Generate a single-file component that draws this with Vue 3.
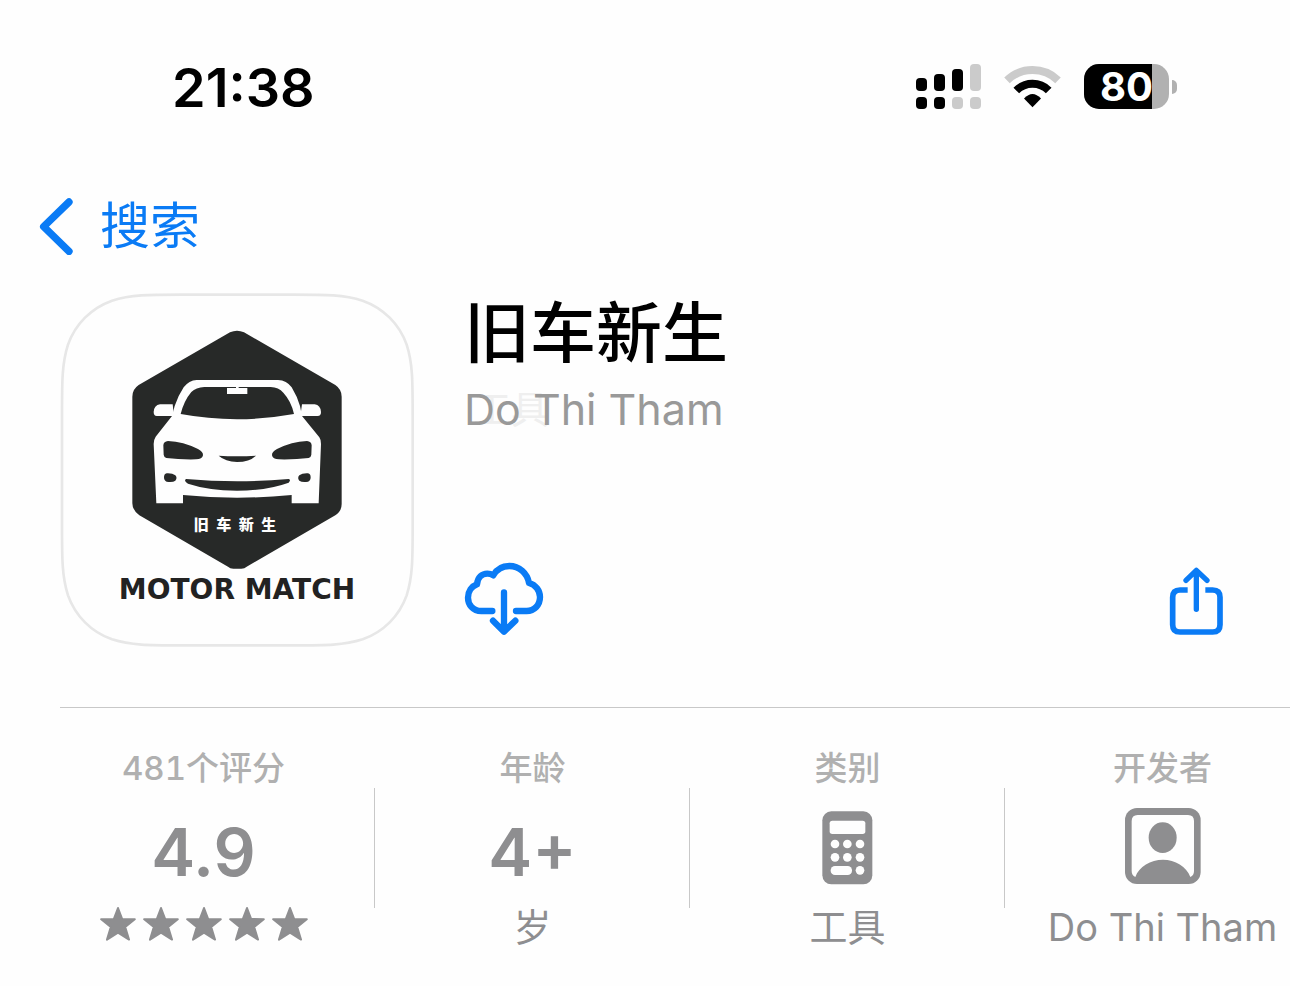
<template>
  <div class="page">
    <header class="status-bar">
      <time class="clock">21:38</time>
      <div class="status-icons">
        <svg class="signal" viewBox="0 0 65 45" aria-hidden="true">
          <rect x="0" y="14" width="11" height="13" rx="4" />
          <rect x="18" y="10" width="11" height="17" rx="4" />
          <rect x="36" y="5" width="11" height="22" rx="4" />
          <rect class="off" x="54" y="0" width="11" height="27" rx="4" />
          <rect x="0" y="33" width="11" height="12" rx="4" />
          <rect x="18" y="33" width="11" height="12" rx="4" />
          <rect class="off" x="36" y="33" width="11" height="12" rx="4" />
          <rect class="off" x="54" y="33" width="11" height="12" rx="4" />
        </svg>
        <svg class="wifi" viewBox="1003 64 59 45" aria-hidden="true">
          <path class="arc off" d="M1007 80.3A37 37 0 0 1 1058 80.3" />
          <path class="arc" d="M1016.3 90.5A23 23 0 0 1 1048.7 90.5" />
          <path d="M1032.5 107.2L1024 98.4Q1032.5 89.4 1041 98.4Z" />
        </svg>
        <div class="battery">
          <div class="battery-body">
            <div class="battery-level" :style="{ width: battery + '%' }"></div>
            <span class="battery-text">{{ battery }}</span>
          </div>
          <div class="battery-cap"></div>
        </div>
      </div>
    </header>

    <nav class="nav">
      <a href="#" class="back">
        <svg viewBox="58 474 102 171" aria-hidden="true">
          <path d="M148 486L72 560L148 634" />
        </svg>
        <span>搜索</span>
      </a>
    </nav>

    <main>
      <section class="app-header">
        <svg class="app-icon" viewBox="30 39 1062 1062" role="img" aria-label="Motor Match">
          <path
            class="icon-border"
            d="M398 44H726C830 44 882 44 938 62C1000 84 1048 132 1070 194C1088 250 1088 302 1088 406V734C1088 838 1088 890 1070 946C1048 1008 1000 1056 938 1078C882 1096 830 1096 726 1096H398C294 1096 242 1096 186 1078C124 1056 76 1008 54 946C36 890 36 838 36 734V406C36 302 36 250 54 194C76 132 124 84 186 62C242 44 294 44 398 44Z"
          />
          <path
            class="ink"
            d="M540 157Q561 148 582 157L856 315Q875 328 875 350V672Q875 694 856 706L590 860Q584 866 574 866H550Q540 866 534 860L268 706Q247 690 247 670V350Q247 328 266 315Z"
          />
          <!-- car body -->
          <path
            class="paper"
            d="M440 300H684Q710 301 725 322Q742 350 750 378L756 408L808 472Q813 479 813 492L806 670H725V645Q561 661 399 645V670H319L311 492Q311 479 317 470L366 408L374 378Q385 346 401 322Q417 301 440 300Z"
          />
          <path class="paper" d="M330 373H368L372 408H320Q311 408 311 396Q312 376 330 373Z" />
          <path class="paper" d="M794 373H756L751 408H803Q813 408 813 396Q812 376 794 373Z" />
          <path
            class="ink"
            d="M463 321H662Q686 322 700 338Q724 364 732 402Q650 417 561 418Q474 417 392 402Q402 362 424 336Q438 322 463 321Z"
          />
          <path class="paper" d="M531 324H558V318H566V324H592V342H531Z" />
          <path class="ink" d="M354 483Q400 485 444 507Q460 515 459 526Q457 538 438 538Q390 539 349 534Q342 532 341 524L340 496Q341 484 354 483Z" />
          <path class="ink" d="M771 483Q725 485 681 507Q665 515 666 526Q668 538 687 538Q735 539 776 534Q783 532 784 524L785 496Q784 484 771 483Z" />
          <path class="ink" d="M506 527Q561 530 618 527Q598 546 561 546Q526 545 506 527Z" />
          <path class="ink" d="M350 580Q367 579 376 586Q383 594 376 602Q368 608 350 605Q342 602 342 592Q342 582 350 580Z" />
          <path class="ink" d="M774 580Q757 579 748 586Q741 594 748 602Q756 608 774 605Q782 602 782 592Q782 582 774 580Z" />
          <path class="ink" d="M408 597Q561 611 716 597Q724 599 716 608Q650 632 561 632Q474 631 414 611Q400 602 408 597Z" />
          <text class="icon-name" x="555" y="749">旧&ensp;车&ensp;新&ensp;生</text>
          <text class="icon-brand" x="561" y="957">MOTOR MATCH</text>
        </svg>

        <div class="app-info">
          <h1 class="app-title">旧车新生</h1>
          <p class="app-subtitle">
            <span class="subtitle-ghost">工具</span>
            <span class="subtitle-text">Do Thi Tham</span>
          </p>
          <div class="actions">
            <button type="button" class="icon-button download" aria-label="下载">
              <svg viewBox="72 36 240 222">
                <path d="M157 183H124C98 183 84 163 84 143C84 124 95 109 111 103C113 82 126 71 142 71Q152 71 160 76C170 58 187 48 208 48C238 48 262 70 267 99C287 104 300 122 300 141C300 165 283 183 260 183H228" />
                <path d="M192 127V244M159 212L192 245L226 212" />
              </svg>
            </button>
            <button type="button" class="icon-button share" aria-label="分享">
              <svg viewBox="57 51 165 207">
                <path class="tray" d="M113 120H90Q68 120 68 142V224Q68 246 90 246H188Q210 246 210 224V142Q210 120 188 120H166" />
                <path d="M139 64V178M108 91L139 61L171 91" />
              </svg>
            </button>
          </div>
        </div>
      </section>

      <section class="stats">
        <div v-for="stat in stats" :key="stat.label" class="stat">
          <div class="stat-label">{{ stat.label }}</div>
          <div class="stat-main">
            <span v-if="stat.value" class="stat-value">{{ stat.value }}</span>
            <svg v-else-if="stat.icon === 'calculator'" class="calculator" viewBox="126 243 153 222" aria-hidden="true">
              <rect x="127" y="244" width="150" height="219" rx="27" />
              <rect class="hole" x="149" y="272" width="107" height="40" rx="8" />
              <template v-for="y in [342, 382]" :key="y">
                <circle v-for="x in [165, 202, 240]" :key="x" class="hole" :cx="x" :cy="y" r="13" />
              </template>
              <rect class="hole" x="152" y="408" width="64" height="27" rx="13" />
              <circle class="hole" cx="240" cy="421" r="13" />
            </svg>
            <svg v-else class="person" viewBox="315 231 228 228" aria-hidden="true">
              <rect x="315" y="231" width="227" height="228" rx="36" />
              <path class="hole" d="M353 252H504Q522 252 522 270V420Q522 433 511 438C500 406 465 386 429 386C392 386 357 406 346 438Q335 434 335 420V270Q335 252 353 252Z" />
              <ellipse cx="428" cy="320" rx="42" ry="46" />
            </svg>
          </div>
          <div v-if="stat.stars" class="stars">
            <svg v-for="n in stat.stars" :key="n" viewBox="0 0 36 36" aria-hidden="true">
              <path d="M18 2L22.2 13L34.8 13.2L25.2 21L29 33.6L18 26.6L7 33.6L10.8 21L1.2 13.2L13.8 13Z" />
            </svg>
          </div>
          <div v-else class="stat-note">{{ stat.note }}</div>
        </div>
      </section>
    </main>
  </div>
</template>

<script setup>
import { ref } from "vue";

const battery = ref(80);

const stats = [
  { label: "481个评分", value: "4.9", stars: 5 },
  { label: "年龄", value: "4+", note: "岁" },
  { label: "类别", icon: "calculator", note: "工具" },
  { label: "开发者", icon: "person", note: "Do Thi Tham" },
];
</script>

<style>
body {
  margin: 0;
  background: #fefefe;
}
</style>

<style scoped>
.page {
  overflow: hidden;
  font-family: Inter, "Noto Sans CJK SC", sans-serif;
  color: #000;
}

.page svg {
  display: block;
}

.status-bar {
  display: flex;
  justify-content: space-between;
  align-items: flex-start;
  padding: 64px 113px 0 172px;
}

.clock {
  font-size: 54px;
  line-height: 48px;
  font-weight: 600;
}

.status-icons {
  display: flex;
  align-items: center;
}

.signal {
  width: 65px;
  height: 45px;
  margin-right: 22px;
}

.wifi {
  width: 59px;
  height: 45px;
  margin-right: 22px;
}

.off {
  fill: #cbcbcb;
}

.arc {
  fill: none;
  stroke: #000;
  stroke-width: 8;
}

.arc.off {
  stroke: #cbcbcb;
}

.battery {
  display: flex;
  align-items: center;
  gap: 3px;
}

.battery-body {
  position: relative;
  width: 85px;
  height: 45px;
  border-radius: 15px;
  background: #b1b1b1;
}

.battery-level {
  height: 100%;
  border-radius: 15px 0 0 15px;
  background: #000;
}

.battery-text {
  position: absolute;
  inset: 0;
  text-align: center;
  font-size: 40px;
  line-height: 45px;
  font-weight: 700;
  color: #fff;
}

.battery-cap {
  width: 5px;
  height: 14px;
  border-radius: 0 7px 7px 0;
  background: #b1b1b1;
}

.nav {
  padding: 78px 39px 0;
}

.back {
  display: inline-flex;
  align-items: center;
  gap: 27px;
  height: 72px;
  font-size: 50px;
  line-height: 72px;
  color: #0a7bf5;
  text-decoration: none;
}

.back svg {
  width: 34px;
  height: 57px;
  fill: none;
  stroke: currentColor;
  stroke-width: 22;
  stroke-linecap: round;
  stroke-linejoin: round;
}

.app-header {
  display: flex;
  gap: 50px;
  margin-left: 60px;
  padding: 31px 66px 60px 0;
  border-bottom: 1px solid #c8c8c8;
}

.app-icon {
  flex: none;
  width: 354px;
  height: 354px;
}

.icon-border {
  fill: #fefefe;
  stroke: #e7e7e7;
  stroke-width: 8;
}

.ink {
  fill: #272928;
}

.paper {
  fill: #fefefe;
}

.icon-name {
  font-size: 45px;
  font-weight: 900;
  text-anchor: middle;
  fill: #fefefe;
}

.icon-brand {
  font-family: "DejaVu Sans", sans-serif;
  font-size: 84px;
  font-weight: 700;
  text-anchor: middle;
  fill: #222;
}

.app-info {
  flex: 1;
  display: flex;
  flex-direction: column;
}

.app-title {
  margin: 0;
  font-size: 66px;
  line-height: 80px;
  font-weight: 500;
}

.app-subtitle {
  position: relative;
  margin: 8px 0 0;
  font-size: 43px;
  line-height: 56px;
  color: #999;
}

.subtitle-ghost {
  position: absolute;
  left: 9px;
  top: 0;
  font-size: 38px;
  color: #efefef;
}

.subtitle-text {
  position: relative;
}

.actions {
  display: flex;
  justify-content: space-between;
  align-items: flex-end;
  margin-top: auto;
  padding-bottom: 11px;
}

.icon-button {
  padding: 0;
  border: none;
  background: none;
  color: #0a7bf5;
  cursor: pointer;
}

.icon-button svg {
  fill: none;
  stroke: currentColor;
  stroke-width: 19;
  stroke-linecap: round;
  stroke-linejoin: round;
}

.download svg {
  width: 80px;
  height: 74px;
}

.share svg {
  width: 55px;
  height: 69px;
  stroke-width: 16;
}

.share .tray {
  stroke-width: 17;
  stroke-linecap: butt;
}

.stats {
  display: grid;
  grid-template-columns: 343fr 315fr 315fr 315fr;
  margin: 0 -30px 0 32px;
  padding: 36px 0;
  color: #8e8e90;
}

.stat {
  position: relative;
  display: flex;
  flex-direction: column;
  align-items: center;
}

.stat:not(:last-child)::after {
  content: "";
  position: absolute;
  top: 44px;
  right: 0;
  width: 1px;
  height: 120px;
  background: #c8c8c8;
}

.stat-label {
  font-size: 33px;
  line-height: 48px;
  font-weight: 500;
  font-variant-numeric: tabular-nums;
  color: #b0b0b0;
}

.stat-main {
  display: flex;
  align-items: center;
  height: 108px;
}

.stat-value {
  padding-top: 12px;
  font-size: 66px;
  line-height: 80px;
  font-weight: 600;
}

.stat-main svg,
.stars svg {
  fill: currentColor;
}

.stat-main .hole {
  fill: #fefefe;
}

.calculator {
  width: 51px;
  height: 74px;
  padding-top: 4px;
}

.person {
  width: 76px;
  height: 76px;
}

.stars {
  display: flex;
  gap: 7px;
  padding-top: 6px;
}

.stars svg {
  width: 36px;
  height: 36px;
  stroke: currentColor;
  stroke-width: 2;
  stroke-linejoin: round;
}

.stat-note {
  font-size: 38px;
  line-height: 54px;
  white-space: nowrap;
}
</style>
